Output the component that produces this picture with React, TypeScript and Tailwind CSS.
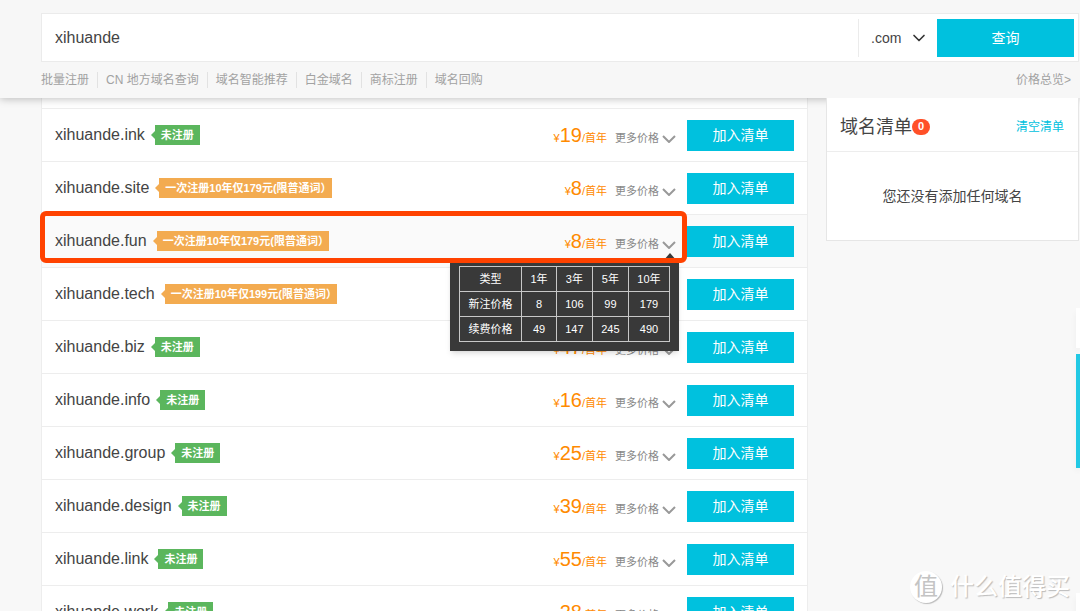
import { ChevronDown } from "lucide-react";

type Domain = {
  name: string;
  price: number;
  promo?: string;
  active?: boolean;
};

const domains: Domain[] = [
  { name: "xihuande.ink", price: 19 },
  { name: "xihuande.site", price: 8, promo: "一次注册10年仅179元(限普通词）" },
  { name: "xihuande.fun", price: 8, promo: "一次注册10年仅179元(限普通词）", active: true },
  { name: "xihuande.tech", price: 8, promo: "一次注册10年仅199元(限普通词）" },
  { name: "xihuande.biz", price: 47 },
  { name: "xihuande.info", price: 16 },
  { name: "xihuande.group", price: 25 },
  { name: "xihuande.design", price: 39 },
  { name: "xihuande.link", price: 55 },
  { name: "xihuande.work", price: 28 },
];

const links = ["批量注册", "CN 地方域名查询", "域名智能推荐", "白金域名", "商标注册", "域名回购"];

const priceHead = ["类型", "1年", "3年", "5年", "10年"];
const priceRows = [
  ["新注价格", "8", "106", "99", "179"],
  ["续费价格", "49", "147", "245", "490"],
];

function Tag({ promo }: { promo?: string }) {
  return (
    <span className="ml-1.5 flex items-center">
      <span
        className={`border-y-4 border-r-4 border-y-transparent ${promo ? "border-r-[#f3ab50]" : "border-r-[#5bb65d]"}`}
      />
      <span
        className={`flex h-5 items-center pl-1.5 text-[11px] font-bold whitespace-nowrap text-white ${
          promo ? "bg-[#f3ab50]" : "bg-[#5bb65d] pr-1.5"
        }`}
      >
        {promo ?? "未注册"}
      </span>
    </span>
  );
}

function PriceTable() {
  return (
    <div className="absolute top-full right-2 z-10 mt-2 bg-[#393939] px-[9px] pt-[5px] pb-[9px] shadow-md">
      <span className="absolute right-0.5 bottom-full border-x-[7px] border-b-8 border-x-transparent border-b-[#393939]" />
      <table className="w-[211px] border-collapse text-center text-[11px] leading-6 whitespace-nowrap text-white">
        <thead>
          <tr>
            {priceHead.map((label) => (
              <th key={label} scope="col" className="border border-[#c8c8c8] px-2 font-normal">
                {label}
              </th>
            ))}
          </tr>
        </thead>
        <tbody>
          {priceRows.map((row) => (
            <tr key={row[0]}>
              {row.map((cell) => (
                <td key={cell} className="border border-[#c8c8c8] px-2">
                  {cell}
                </td>
              ))}
            </tr>
          ))}
        </tbody>
      </table>
    </div>
  );
}

function DomainRow({ domain }: { domain: Domain }) {
  return (
    <li
      className={`relative flex h-[53px] items-center border-t border-[#ededed] px-[13px] ${
        domain.active ? "bg-[#fafafa]" : ""
      }`}
    >
      <span className="text-base text-[#444]">{domain.name}</span>
      <Tag promo={domain.promo} />
      <div className="relative ml-auto flex items-baseline pr-[11px]">
        <span className="text-[11px] text-[#ff8a00]">
          ¥<span className="text-xl leading-6">{domain.price}</span>/首年
        </span>
        <button type="button" className="ml-2 flex items-center text-[11px] text-[#888]">
          更多价格
          <svg viewBox="0 0 14 8" className="mt-0.5 ml-[3px] h-2 w-3.5 fill-none stroke-[#999] stroke-2">
            <path d="M1 1l6 6 6-6" />
          </svg>
        </button>
        {domain.active && <PriceTable />}
      </div>
      <button type="button" className="h-[31px] w-[107px] bg-[#00c1de] text-sm text-white">
        加入清单
      </button>
      {domain.active && (
        <span className="pointer-events-none absolute -top-1 right-[120px] bottom-1 -left-0.5 z-20 rounded-md border-[5px] border-[#ff4200]" />
      )}
    </li>
  );
}

export default function App() {
  return (
    <div className="relative h-screen overflow-hidden bg-[#f8f8f8] font-['Liberation_Sans','Noto_Sans_CJK_SC',sans-serif] text-[#444]">
      <header className="relative z-30 bg-[#f7f7f7] pt-[13px] pr-px pl-[41px] shadow-[0_1px_8px_rgba(0,0,0,0.25)]">
        <form className="flex h-[49px] items-center border border-[#ebebeb] bg-white pr-1">
          <input
            aria-label="域名"
            defaultValue="xihuande"
            className="h-full min-w-0 flex-1 px-[13px] text-base text-[#444] outline-none"
          />
          <div className="relative flex h-[38px] w-[79px] items-center border-l border-[#ebebeb]">
            <select aria-label="后缀" className="h-full w-full appearance-none pl-3 text-sm text-[#444] outline-none">
              <option>.com</option>
            </select>
            <ChevronDown className="pointer-events-none absolute right-2 size-5 text-[#333]" />
          </div>
          <button type="button" className="h-[38px] w-[137px] bg-[#00c1de] text-sm text-white">
            查询
          </button>
        </form>
        <nav className="flex h-9 items-center pr-2 text-xs text-[#a2a2a2]">
          {links.map((label, i) => (
            <a key={label} href="#" className={i === 0 ? "pr-2" : "border-l border-[#e2e2e2] px-2"}>
              {label}
            </a>
          ))}
          <a href="#" className="ml-auto">
            价格总览&gt;
          </a>
        </nav>
      </header>

      <main className="flex items-start gap-[18px] pr-px pl-[41px]">
        <ul className="min-w-0 flex-1 border-x border-[#ededed] bg-white pt-2.5">
          {domains.map((domain) => (
            <DomainRow key={domain.name} domain={domain} />
          ))}
        </ul>
        <aside className="relative z-30 w-[253px] border-x border-b border-[#e6e6e6] bg-white">
          <div className="flex h-[54px] items-center border-b border-[#ededed] pt-1 pr-3.5 pl-[13px]">
            <h2 className="text-lg">域名清单</h2>
            <span className="flex h-4 items-center rounded-full bg-[#ff5028] px-1.5 text-[11px] font-bold text-white">0</span>
            <button type="button" className="ml-auto text-xs text-[#00c1de]">
              清空清单
            </button>
          </div>
          <p className="py-[34px] text-center text-sm">您还没有添加任何域名</p>
        </aside>
      </main>

      {/* floating side tools, cut off by the window edge */}
      <div className="absolute top-[308px] right-0 z-30 flex w-1 flex-col gap-1.5">
        <span className="h-10 bg-white shadow-md" />
        <span className="h-[114px] bg-[#22c9e4] shadow-md" />
      </div>
      <span className="absolute right-0 bottom-0 z-30 h-[18px] w-1 bg-white shadow-md" />

      <div className="absolute right-2.5 bottom-2 z-30 flex items-center gap-2 text-white">
        <span className="grid size-8 place-items-center rounded-full bg-white text-2xl text-[#c4c4c4] shadow-[1px_1px_1px_#bbb]">
          值
        </span>
        <span className="text-2xl font-medium [text-shadow:1px_1px_1px_#bbb]">什么值得买</span>
      </div>
    </div>
  );
}
